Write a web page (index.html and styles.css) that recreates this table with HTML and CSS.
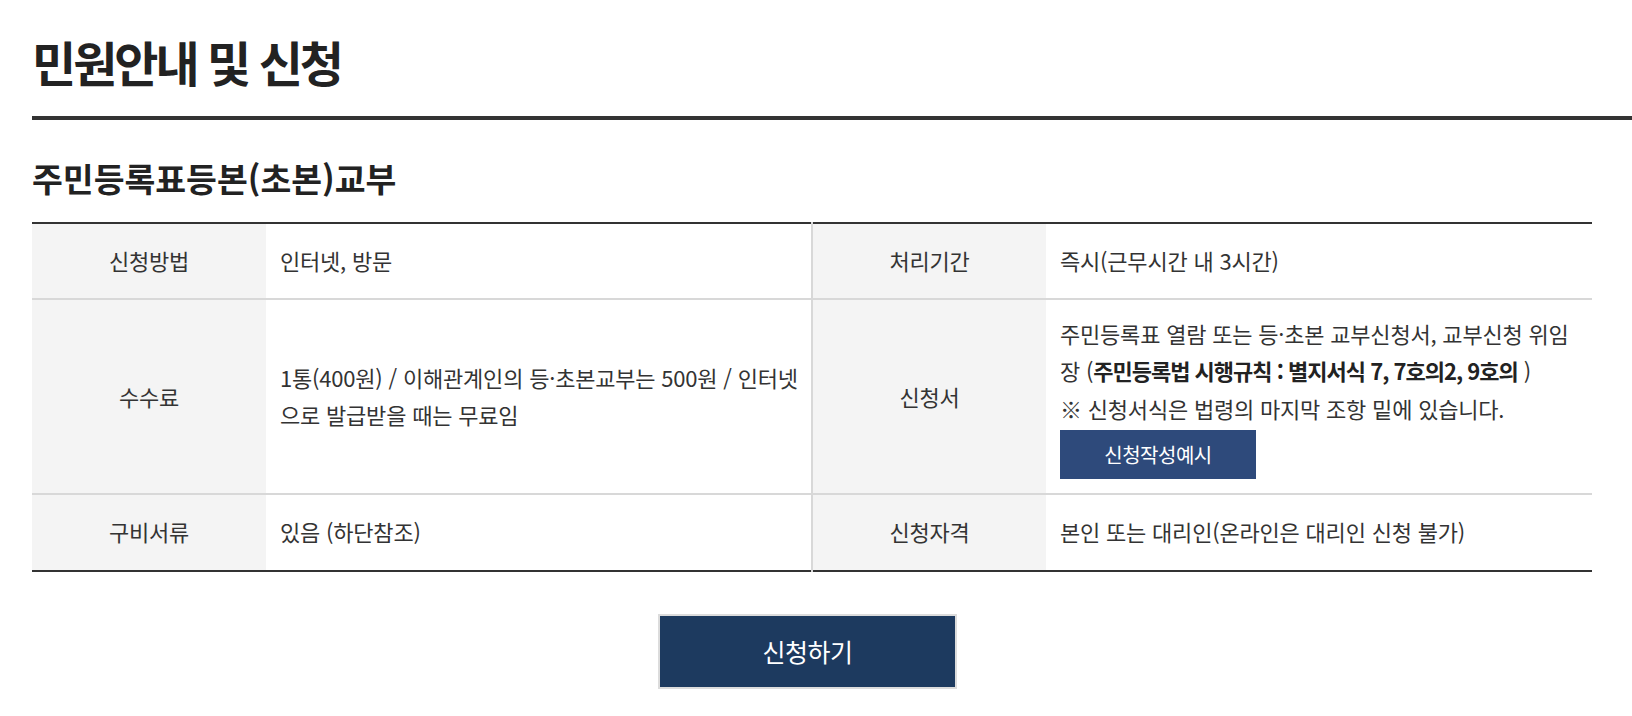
FILE: index.html
```html
<!DOCTYPE html>
<html lang="ko">
<head>
<meta charset="utf-8">
<title>민원안내 및 신청</title>
<link rel="stylesheet" href="styles.css">
</head>
<body>
<div class="page">
  <h1 class="title">민원안내 및 신청</h1>
  <div class="rule"></div>
  <h2 class="sub">주민등록표등본(초본)교부</h2>
  <table class="info">
    <colgroup>
      <col class="c-th"><col class="c-td"><col class="c-th"><col class="c-td">
    </colgroup>
    <tbody>
      <tr>
        <th>신청방법</th>
        <td>인터넷, 방문</td>
        <th class="mid">처리기간</th>
        <td>즉시(근무시간 내 3시간)</td>
      </tr>
      <tr>
        <th>수수료</th>
        <td class="nowrap">1통(400원) / 이해관계인의 등·초본교부는 500원 / 인터넷<br>으로 발급받을 때는 무료임</td>
        <th class="mid">신청서</th>
        <td class="doc nowrap">주민등록표 열람 또는 등·초본 교부신청서, 교부신청 위임<br>장 (<b>주민등록법 시행규칙 : 별지서식 7, 7호의2, 9호의</b> )<br>※ 신청서식은 법령의 마지막 조항 밑에 있습니다.<br><a class="btn-sample" href="#">신청작성예시</a></td>
      </tr>
      <tr class="last">
        <th>구비서류</th>
        <td>있음 (하단참조)</td>
        <th class="mid">신청자격</th>
        <td>본인 또는 대리인(온라인은 대리인 신청 불가)</td>
      </tr>
    </tbody>
  </table>
  <div class="actions">
    <a class="btn-apply" href="#">신청하기</a>
  </div>
</div>
</body>
</html>
```

FILE: styles.css
```css
* { box-sizing: border-box; }
html, body { margin: 0; padding: 0; background: #fff; }
body {
  font-family: "Noto Sans CJK KR", "Noto Sans", sans-serif;
  color: #333;
}
.page {
  padding: 0 0 0 32px;
}
.title {
  margin: 0;
  padding-top: 33px;
  font-size: 48px;
  line-height: 56px;
  font-weight: 700;
  letter-spacing: -3px;
  color: #222;
}
.rule {
  margin-top: 27px;
  height: 4px;
  background: #333;
}
.sub {
  margin: 38px 0 0;
  font-size: 33.5px;
  line-height: 40px;
  font-weight: 700;
  letter-spacing: 0;
  color: #222;
}
.info {
  margin-top: 24px;
  width: 1560px;
  border-collapse: collapse;
  table-layout: fixed;
  border-top: 2px solid #333;
  border-bottom: 2px solid #333;
  font-size: 22px;
  line-height: 37.5px;
  letter-spacing: -0.2px;
}
.c-th { width: 234px; }
.c-td { width: 546px; }
.info th, .info td {
  padding: 18px 14px;
  border-bottom: 2px solid #d8d8d8;
  vertical-align: middle;
}
.info tr.last th, .info tr.last td { padding-bottom: 19px; border-bottom: 0; }
.info th {
  background: #f4f4f4;
  font-weight: 400;
  text-align: center;
  color: #333;
}
.info th.mid { border-left: 2px solid #d8d8d8; }
.info td { text-align: left; color: #333; }
.info td.nowrap { white-space: nowrap; }
.info td.doc { padding-top: 15px; padding-bottom: 14px; }
.info td b { font-weight: 700; color: #222; letter-spacing: -1px; }
.btn-sample {
  display: inline-flex;
  align-items: center;
  justify-content: center;
  margin-top: 3px;
  width: 196px;
  height: 49px;
  background: #2e4a7b;
  color: #fff;
  font-size: 20px;
  letter-spacing: -0.5px;
  text-decoration: none;
}
.actions {
  width: 1560px;
  display: flex;
  justify-content: center;
  padding-right: 9px;
  margin-top: 42px;
}
.btn-apply {
  display: flex;
  align-items: center;
  justify-content: center;
  width: 299px;
  height: 75px;
  border: 2px solid #dcdcdc;
  background: #1d3a5f;
  color: #fff;
  font-size: 25px;
  letter-spacing: -0.5px;
  text-decoration: none;
}
```
